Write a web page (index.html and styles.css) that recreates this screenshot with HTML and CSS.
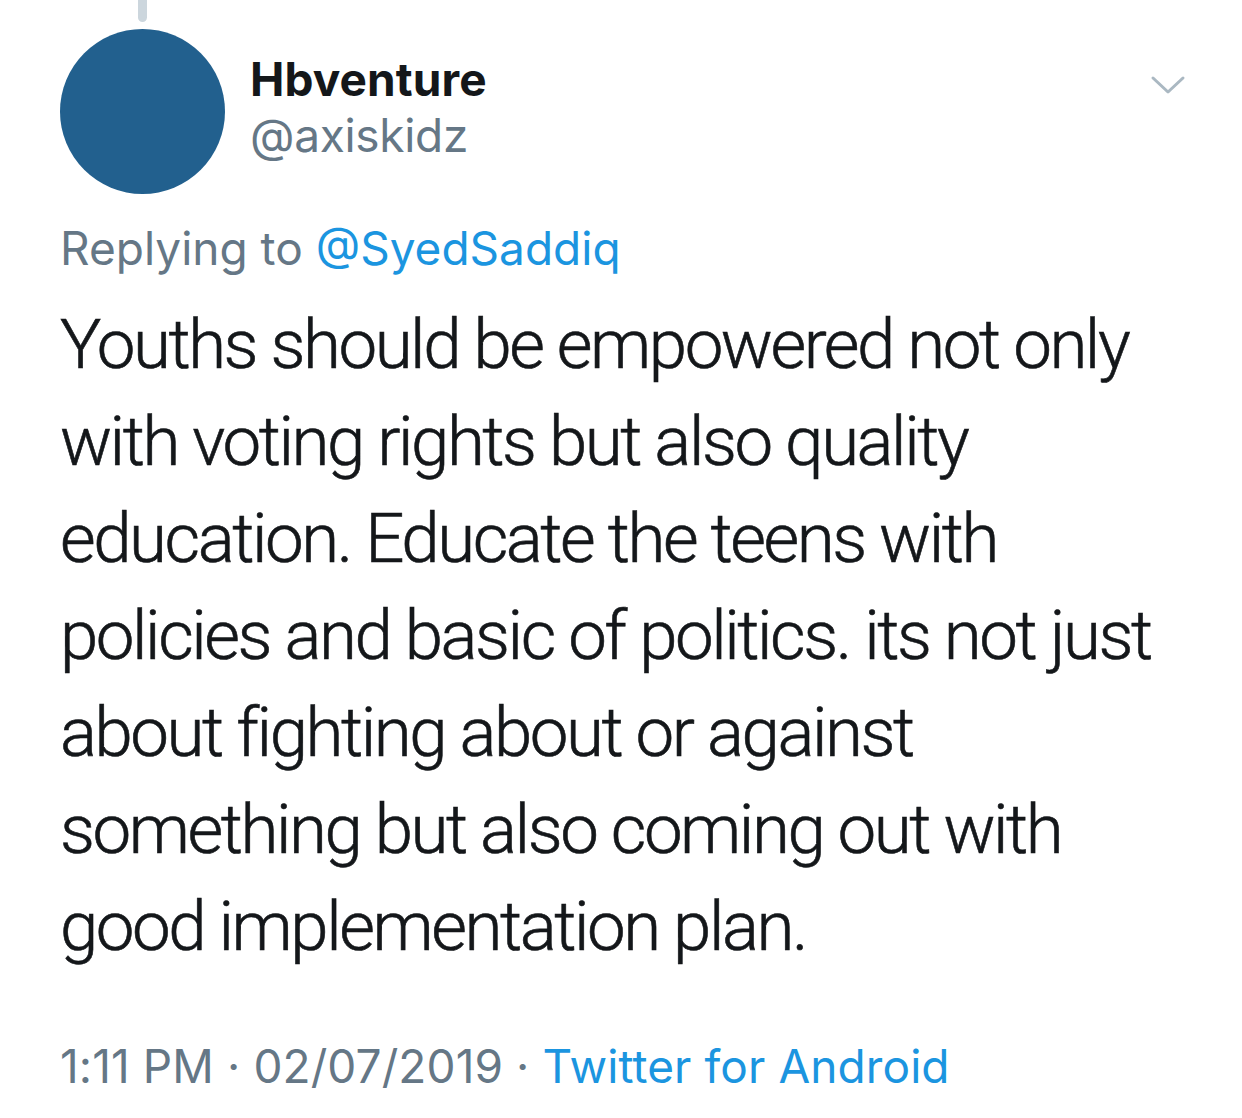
FILE: index.html
```html
<!DOCTYPE html>
<html>
<head>
<meta charset="utf-8">
<link rel="stylesheet" href="styles.css">
</head>
<body>
<div class="tweet">
  <div class="thread-line"></div>
  <div class="header">
    <div class="avatar"></div>
    <div class="names">
      <div class="name">Hbventure</div>
      <div class="handle">@axiskidz</div>
    </div>
    <svg class="chevron" width="36" height="22" viewBox="0 0 36 22">
      <path d="M3 4 L18 18 L33 4" fill="none" stroke="#aab8c2" stroke-width="3" stroke-linecap="round" stroke-linejoin="round"/>
    </svg>
  </div>
  <div class="reply">Replying to <span class="link">@SyedSaddiq</span></div>
  <div class="text">Youths should be empowered not only<br>with voting rights but also quality<br>education. Educate the teens with<br>policies and basic of politics. its not just<br>about fighting about or against<br>something but also coming out with<br>good implementation plan.</div>
  <div class="meta">1:11 PM · 02/07/2019 · <span class="link">Twitter for Android</span></div>
</div>
</body>
</html>
```
FILE: styles.css
```css
html, body {
  margin: 0;
  padding: 0;
  background: #ffffff;
}
.tweet {
  width: 1242px;
  height: 1118px;
  box-sizing: border-box;
  padding: 0 56px 0 60px;
  font-family: "Inter", "Liberation Sans", sans-serif;
  color: #14171a;
  overflow: hidden;
}
.thread-line {
  width: 9px;
  height: 22px;
  margin-left: 78px;
  background: #ccd6dd;
  border-radius: 0 0 5px 5px;
}
.header {
  display: flex;
  align-items: flex-start;
  margin-top: 7px;
}
.avatar {
  width: 165px;
  height: 165px;
  border-radius: 50%;
  background: #22608e;
  flex: none;
}
.names {
  margin-left: 25px;
  flex: 1;
  padding-top: 22px;
}
.name {
  font-size: 46px;
  font-weight: 700;
  line-height: 56px;
  letter-spacing: 0.1px;
}
.handle {
  font-size: 46px;
  line-height: 56px;
  color: #657786;
  letter-spacing: -0.3px;
}
.chevron {
  margin-top: 45px;
  flex: none;
}
.reply {
  margin-top: 26px;
  font-size: 46px;
  line-height: 56px;
  color: #657786;
}
.link {
  color: #1b95e0;
}
.text {
  margin-top: 20px;
  font-family: "Roboto", "Liberation Sans", sans-serif;
  font-size: 69px;
  line-height: 97px;
  font-weight: 300;
  letter-spacing: -2.45px;
  white-space: nowrap;
  color: #14171a;
  -webkit-text-stroke: 0.6px #14171a;
}
.meta {
  margin-top: 63px;
  font-size: 46px;
  line-height: 56px;
  color: #657786;
  letter-spacing: 0.1px;
}
```
